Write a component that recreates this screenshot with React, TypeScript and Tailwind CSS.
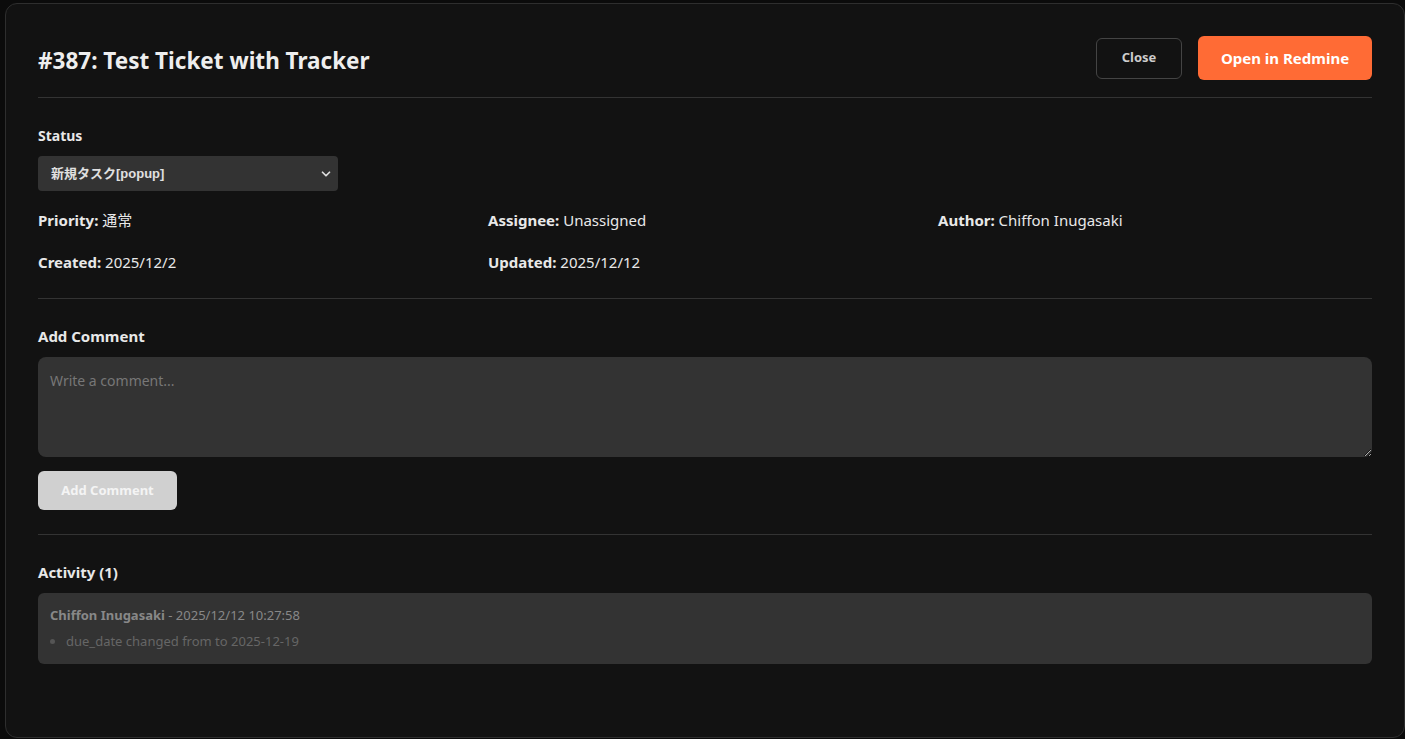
import { ChevronDown } from 'lucide-react'

const font = { fontFamily: '"Noto Sans", "Noto Sans CJK JP", sans-serif' }

function Field({ label, value }: { label: string; value: string }) {
  return (
    <div className="text-[15px] leading-[21px] text-[#e8e8e8]">
      <span className="font-bold">{label}:</span> {value}
    </div>
  )
}

export default function App() {
  return (
    <div className="min-h-screen bg-[#0b0b0b] pt-[3px] pl-[5px]" style={font}>
      <div className="h-[735px] rounded-xl border border-[#2e2e2e] bg-[#121212] px-8 pt-8">
        {/* header */}
        <div className="flex items-center justify-between border-b border-[#333] pb-[17px]">
          <h2 className="pt-[6px] text-[22.5px] font-bold text-[#eee]">#387: Test Ticket with Tracker</h2>
          <div className="flex items-center gap-4">
            <button className="h-[41px] w-[86px] rounded-md border border-[#444] text-[13px] font-bold text-[#ccc]">
              Close
            </button>
            <button className="h-[44px] w-[174px] rounded-md bg-[#ff6b35] text-[15px] font-bold text-white">
              Open in Redmine
            </button>
          </div>
        </div>

        {/* details */}
        <div className="border-b border-[#333] pt-[28px] pb-[25px]">
          <div className="text-[14px] font-bold leading-5 text-[#e8e8e8]">Status</div>
          <div className="relative mt-[10px] flex h-[35px] w-[300px] items-center rounded bg-[#333] px-[13px]">
            <span
              className="text-[13px] font-bold text-[#e0e0e0]"
              style={{ fontFamily: '"Liberation Sans", "Noto Sans CJK JP", sans-serif' }}
            >
              新規タスク[popup]
            </span>
            <ChevronDown className="absolute right-[5px] h-[14px] w-[14px] text-[#ddd]" strokeWidth={3} />
          </div>
          <div className="mt-[19px] grid grid-cols-3 gap-x-4 gap-y-[21px]">
            <Field label="Priority" value="通常" />
            <Field label="Assignee" value="Unassigned" />
            <Field label="Author" value="Chiffon Inugasaki" />
            <Field label="Created" value="2025/12/2" />
            <Field label="Updated" value="2025/12/12" />
          </div>
        </div>

        {/* comment */}
        <div className="border-b border-[#333] pt-[27px] pb-6">
          <div className="text-[15px] font-bold leading-5 text-[#e8e8e8]">Add Comment</div>
          <textarea
            placeholder="Write a comment..."
            className="mt-[11px] block h-[100px] w-full rounded-lg bg-[#333] px-3 py-[13px] text-[14px] text-[#ddd] placeholder:text-[#777] outline-none"
          />
          <button
            disabled
            className="mt-[14px] h-[39px] w-[139px] rounded-md bg-[#d0d0d0] text-[13px] font-bold text-[#f4f4f4]"
          >
            Add Comment
          </button>
        </div>

        {/* activity */}
        <div className="pt-[27px]">
          <div className="text-[15px] font-bold leading-5 text-[#e8e8e8]">Activity (1)</div>
          <div className="mt-[11px] rounded-md bg-[#333] px-3 pt-[13px] pb-[13px] text-[13px] leading-[19px] text-[#888]">
            <div>
              <span className="font-bold">Chiffon Inugasaki</span> - 2025/12/12 10:27:58
            </div>
            <ul className="mt-[7px] list-disc pl-[16px] text-[#666] marker:text-[#555]">
              <li>due_date changed from to 2025-12-19</li>
            </ul>
          </div>
        </div>
      </div>
    </div>
  )
}
